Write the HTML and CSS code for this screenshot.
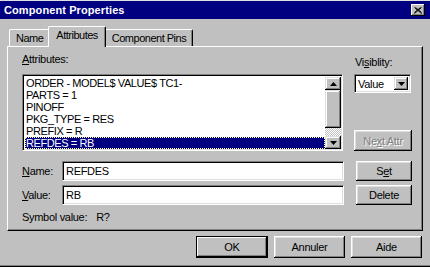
FILE: index.html
```html
<!DOCTYPE html>
<html lang="en">
<head>
<meta charset="UTF-8">
<meta name="viewport" content="width=device-width, initial-scale=1.0">
<title>Component Properties</title>
<link rel="stylesheet" href="styles.css">
</head>
<body>

<div class="window">
    <div class="titlebar">
        <span class="title">Component Properties</span>
        <button class="close" type="button">
            <svg width="8" height="7" viewBox="0 0 8 7"><path d="M0.5 0.5 L7.5 6.5 M1.5 0.5 L7.5 5.5 M7.5 0.5 L0.5 6.5 M6.5 0.5 L0.5 5.5" stroke="#000" stroke-width="1" fill="none"/></svg>
        </button>
    </div>

    <div class="content">
        <div class="tabs">
            <div class="tab">Name</div>
            <div class="tab active">Attributes</div>
            <div class="tab">Component Pins</div>
        </div>

        <div class="panel">
            <div class="label span2"><u>A</u>ttributes:</div>
            <div class="label side">Vi<u>s</u>iblity:</div>

            <div class="listbox span2">
                <ul class="items">
                    <li>ORDER - MODEL$ VALUE$ TC1-</li>
                    <li>PARTS = 1</li>
                    <li>PINOFF</li>
                    <li>PKG_TYPE = RES</li>
                    <li>PREFIX = R</li>
                    <li class="selected">REFDES = RB</li>
                </ul>
                <div class="scrollbar">
                    <div class="arrow">
                        <svg width="7" height="4" viewBox="0 0 7 4"><polygon points="3.5,0 7,4 0,4" fill="#000"/></svg>
                    </div>
                    <div class="thumb"></div>
                    <div class="track"></div>
                    <div class="arrow">
                        <svg width="7" height="4" viewBox="0 0 7 4"><polygon points="0,0 7,0 3.5,4" fill="#000"/></svg>
                    </div>
                </div>
            </div>
            <div class="side side-stack">
                <div class="combo">
                    <span class="combo-text">Value</span>
                    <span class="combo-btn">
                        <svg width="7" height="4" viewBox="0 0 7 4"><polygon points="0,0 7,0 3.5,4" fill="#000"/></svg>
                    </span>
                </div>
                <button class="btn disabled" type="button">Ne<u>x</u>t Attr</button>
            </div>

            <div class="label row-label first"><u>N</u>ame:</div>
            <input class="field first" type="text" value="REFDES">
            <button class="btn side small first" type="button">S<u>e</u>t</button>

            <div class="label row-label"><u>V</u>alue:</div>
            <input class="field" type="text" value="RB">
            <button class="btn side small" type="button">Delete</button>

            <div class="symbol span3">Symbol value:<span class="symbol-value">R?</span></div>
        </div>

        <div class="actions">
            <button class="btn wide default" type="button">OK</button>
            <button class="btn wide" type="button">Annuler</button>
            <button class="btn wide" type="button">Aide</button>
        </div>
    </div>
</div>

</body>
</html>
```

FILE: styles.css
```css
body {
    margin: 0;
    padding: 0;
    background-color: #c0c0c0;
    font-family: "Liberation Sans", Arial, sans-serif;
    font-size: 11px;
    color: #000;
}
u {
    text-decoration: underline;
    text-underline-offset: 1px;
}
.window {
    width: 430px;
    height: 267px;
    box-sizing: border-box;
    border-top: 1px solid #dfdfdf;
    background-color: #c0c0c0;
    box-shadow: inset 0 -1px #000, inset 0 -2px #808080;
    display: flex;
    flex-direction: column;
}
.titlebar {
    height: 18px;
    background-color: #000080;
    display: flex;
    align-items: center;
    justify-content: space-between;
    padding: 0 5px 0 4px;
}
.title {
    color: #fff;
    font-weight: bold;
    font-size: 11px;
    letter-spacing: 0.1px;
}
.close {
    width: 14px;
    height: 12px;
    padding: 0;
    border: none;
    background-color: #c0c0c0;
    box-shadow: inset -1px -1px #000, inset 1px 1px #fff, inset -2px -2px #808080;
    display: flex;
    align-items: center;
    justify-content: center;
}
.content {
    padding: 7px 7px 0 7px;
}
.tabs {
    display: flex;
    align-items: flex-end;
    height: 20px;
    padding-left: 2px;
}
.tab {
    height: 17px;
    box-sizing: border-box;
    padding: 2px 6px 0 6px;
    border-top: 1px solid #fff;
    border-left: 1px solid #fff;
    border-right: 1px solid #000;
    box-shadow: inset -1px 0 #808080;
    border-radius: 2px 2px 0 0;
    line-height: 13px;
    letter-spacing: -0.5px;
}
.tab.active {
    height: 21px;
    margin: 0 -1px -1px -2px;
    padding: 2px 7px 0 7px;
    background-color: #c0c0c0;
    position: relative;
    z-index: 1;
}
.panel {
    height: 185px;
    box-sizing: border-box;
    border-top: 1px solid #fff;
    border-left: 1px solid #fff;
    border-right: 1px solid #000;
    border-bottom: 1px solid #000;
    box-shadow: inset -1px -1px #808080;
    padding: 6px 8px 0 14px;
    display: grid;
    grid-template-columns: 40px 281px 1fr;
    align-content: start;
}
.span2 {
    grid-column: 1 / 3;
}
.span3 {
    grid-column: 1 / 4;
}
.side {
    grid-column: 3;
    margin-left: 12px;
}
.label {
    line-height: 13px;
    letter-spacing: -0.3px;
    height: 21px;
}
.label.side {
    padding-top: 3px;
    height: 18px;
}
.listbox {
    height: 77px;
    box-sizing: border-box;
    border-top: 1px solid #808080;
    border-left: 1px solid #808080;
    border-right: 1px solid #fff;
    border-bottom: 1px solid #fff;
    box-shadow: inset 1px 1px #000, inset -1px -1px #dfdfdf;
    padding: 2px 1px 1px 2px;
    background-color: #fff;
    display: flex;
}
.items {
    flex: 1;
    list-style: none;
    margin: 0;
    padding: 0;
    letter-spacing: -0.4px;
}
.items li {
    height: 12px;
    line-height: 12px;
    padding-left: 1px;
    white-space: nowrap;
}
.items li.selected {
    background-color: #000080;
    color: #fff;
    outline: 1px dotted #ffffa0;
    outline-offset: -1px;
}
.scrollbar {
    width: 16px;
    display: flex;
    flex-direction: column;
}
.arrow {
    height: 13px;
    background-color: #c0c0c0;
    box-shadow: inset -1px -1px #000, inset 1px 1px #dfdfdf, inset -2px -2px #808080, inset 2px 2px #fff;
    display: flex;
    align-items: center;
    justify-content: center;
}
.thumb {
    height: 38px;
    background-color: #c0c0c0;
    box-shadow: inset -1px -1px #000, inset 1px 1px #dfdfdf, inset -2px -2px #808080, inset 2px 2px #fff;
}
.track {
    flex: 1;
    background: repeating-conic-gradient(#fff 0 25%, #c0c0c0 0 50%) 0 0 / 2px 2px;
}
.side-stack {
    display: flex;
    flex-direction: column;
    justify-content: space-between;
    height: 77px;
    margin-left: 11px;
}
.combo {
    width: 57px;
    height: 19px;
    box-sizing: border-box;
    border-top: 1px solid #808080;
    border-left: 1px solid #808080;
    border-right: 1px solid #fff;
    border-bottom: 1px solid #fff;
    box-shadow: inset 1px 1px #000, inset -1px -1px #dfdfdf;
    background-color: #fff;
    padding: 2px;
    display: flex;
    align-items: stretch;
}
.combo-text {
    flex: 1;
    padding-left: 1px;
    line-height: 15px;
    letter-spacing: -0.3px;
}
.combo-btn {
    width: 14px;
    background-color: #c0c0c0;
    box-shadow: inset -1px -1px #000, inset 1px 1px #dfdfdf, inset -2px -2px #808080, inset 2px 2px #fff;
    display: flex;
    align-items: center;
    justify-content: center;
}
.btn {
    font-family: "Liberation Sans", Arial, sans-serif;
    font-size: 11px;
    color: #000;
    background-color: #c0c0c0;
    border: none;
    padding: 0;
    box-shadow: inset -1px -1px #000, inset 1px 1px #fff, inset -2px -2px #808080, inset 2px 2px #dfdfdf;
    letter-spacing: -0.3px;
}
.btn.disabled {
    width: 58px;
    height: 21px;
    color: #808080;
    text-shadow: 1px 1px #fff;
}
.btn.small {
    width: 56px;
    height: 20px;
    margin-left: 13px;
}
.btn.wide {
    width: 71px;
    height: 22px;
}
.btn.default {
    width: 72px;
    box-shadow: inset 0 0 0 1px #000, inset -2px -2px #000, inset 2px 2px #fff, inset -3px -3px #808080;
}
.row-label {
    height: 20px;
    line-height: 20px;
    margin-bottom: 4px;
}
.field {
    height: 20px;
    box-sizing: border-box;
    border-top: 1px solid #808080;
    border-left: 1px solid #808080;
    border-right: 1px solid #fff;
    border-bottom: 1px solid #fff;
    box-shadow: inset 1px 1px #000, inset -1px -1px #dfdfdf;
    background-color: #fff;
    font-family: "Liberation Sans", Arial, sans-serif;
    font-size: 11px;
    letter-spacing: -0.3px;
    padding: 0 3px;
    margin: 0;
    width: 282px;
}
.first {
    margin-top: 10px;
}
.symbol {
    margin-top: 2px;
    line-height: 13px;
    letter-spacing: -0.3px;
}
.symbol-value {
    margin-left: 9px;
}
.actions {
    display: flex;
    justify-content: flex-end;
    gap: 6px;
    margin-top: 5px;
    padding-right: 1px;
}
```
